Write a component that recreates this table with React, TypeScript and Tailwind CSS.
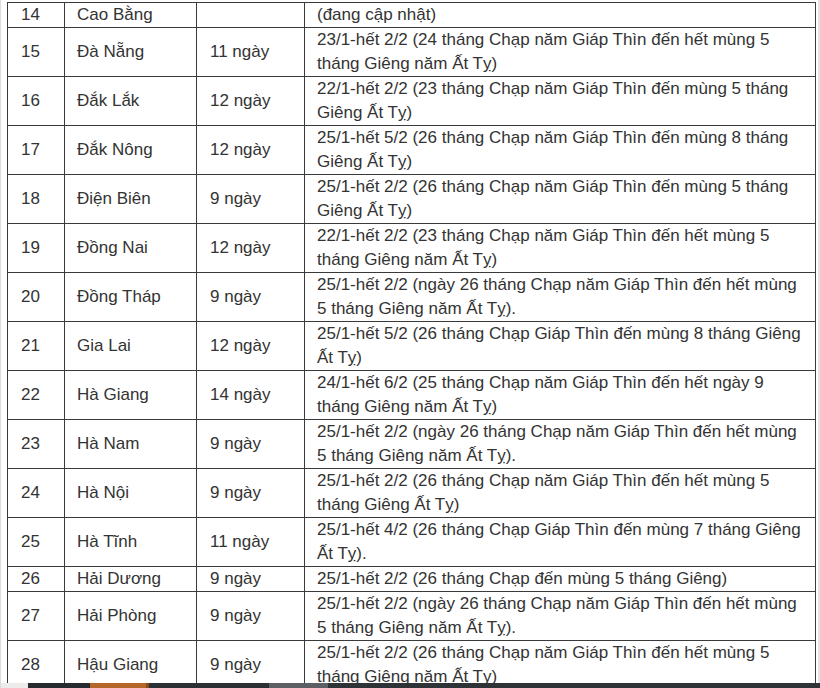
import React from "react";

type Row = { n: string; name: string; days: string; lines: string[] };

const rows: Row[] = [
  { n: "14", name: "Cao Bằng", days: "", lines: ["(đang cập nhật)"] },
  { n: "15", name: "Đà Nẵng", days: "11 ngày", lines: ["23/1-hết 2/2 (24 tháng Chạp năm Giáp Thìn đến hết mùng 5", "tháng Giêng năm Ất Tỵ)"] },
  { n: "16", name: "Đắk Lắk", days: "12 ngày", lines: ["22/1-hết 2/2 (23 tháng Chạp năm Giáp Thìn đến mùng 5 tháng", "Giêng Ất Tỵ)"] },
  { n: "17", name: "Đắk Nông", days: "12 ngày", lines: ["25/1-hết 5/2 (26 tháng Chạp năm Giáp Thìn đến mùng 8 tháng", "Giêng Ất Tỵ)"] },
  { n: "18", name: "Điện Biên", days: "9 ngày", lines: ["25/1-hết 2/2 (26 tháng Chạp năm Giáp Thìn đến mùng 5 tháng", "Giêng Ất Tỵ)"] },
  { n: "19", name: "Đồng Nai", days: "12 ngày", lines: ["22/1-hết 2/2 (23 tháng Chạp năm Giáp Thìn đến hết mùng 5", "tháng Giêng năm Ất Tỵ)"] },
  { n: "20", name: "Đồng Tháp", days: "9 ngày", lines: ["25/1-hết 2/2 (ngày 26 tháng Chạp năm Giáp Thìn đến hết mùng", "5 tháng Giêng năm Ất Tỵ)."] },
  { n: "21", name: "Gia Lai", days: "12 ngày", lines: ["25/1-hết 5/2 (26 tháng Chạp Giáp Thìn đến mùng 8 tháng Giêng", "Ất Tỵ)"] },
  { n: "22", name: "Hà Giang", days: "14 ngày", lines: ["24/1-hết 6/2 (25 tháng Chạp năm Giáp Thìn đến hết ngày 9", "tháng Giêng năm Ất Tỵ)"] },
  { n: "23", name: "Hà Nam", days: "9 ngày", lines: ["25/1-hết 2/2 (ngày 26 tháng Chạp năm Giáp Thìn đến hết mùng", "5 tháng Giêng năm Ất Tỵ)."] },
  { n: "24", name: "Hà Nội", days: "9 ngày", lines: ["25/1-hết 2/2 (26 tháng Chạp năm Giáp Thìn đến hết mùng 5", "tháng Giêng Ất Tỵ)"] },
  { n: "25", name: "Hà Tĩnh", days: "11 ngày", lines: ["25/1-hết 4/2 (26 tháng Chạp Giáp Thìn đến mùng 7 tháng Giêng", "Ất Tỵ)."] },
  { n: "26", name: "Hải Dương", days: "9 ngày", lines: ["25/1-hết 2/2 (26 tháng Chạp đến mùng 5 tháng Giêng)"] },
  { n: "27", name: "Hải Phòng", days: "9 ngày", lines: ["25/1-hết 2/2 (ngày 26 tháng Chạp năm Giáp Thìn đến hết mùng", "5 tháng Giêng năm Ất Tỵ)."] },
  { n: "28", name: "Hậu Giang", days: "9 ngày", lines: ["25/1-hết 2/2 (26 tháng Chạp năm Giáp Thìn đến hết mùng 5", "tháng Giêng năm Ất Tỵ)"] },
];

export default function App() {
  return (
    <div
      className="relative w-[820px] h-[688px] overflow-hidden bg-white border-l border-[#dcdcdc]"
      style={{ fontFamily: '"Liberation Sans", Arial, sans-serif' }}
    >
      <div className="pl-[6px] pt-[2px]">
        <table className="table-fixed border-collapse w-[808px] text-[17px] leading-[24px] text-[#333]">
          <colgroup>
            <col className="w-[57px]" />
            <col className="w-[132px]" />
            <col className="w-[108px]" />
            <col className="w-[511px]" />
          </colgroup>
          <tbody>
            {rows.map((r) => (
              <tr key={r.n}>
                <td className="border border-[#3a3a3a] pl-[13px] pr-[4px] py-0 align-middle">{r.n}</td>
                <td className="border border-[#3a3a3a] pl-[12px] pr-[4px] py-0 align-middle whitespace-nowrap">{r.name}</td>
                <td className="border border-[#3a3a3a] pl-[13px] pr-[4px] py-0 align-middle whitespace-nowrap">{r.days}</td>
                <td className="border border-[#3a3a3a] pl-[12px] pr-[4px] py-0 align-middle">
                  {r.lines.map((l, i) => (
                    <div key={i} className="whitespace-nowrap">
                      {l}
                    </div>
                  ))}
                </td>
              </tr>
            ))}
          </tbody>
        </table>
      </div>
      <div className="absolute right-0 top-0 h-full w-[2px] bg-[#e4e4e4]" />
      <div className="absolute left-0 bottom-0 w-[820px] h-[5px] flex">
        <div className="w-[27px] bg-[#ececec]" />
        <div className="w-[62px] bg-[#262b2f]" />
        <div className="w-[56px] bg-[#b5672a]" />
        <div className="w-[3px] bg-[#8a4a18]" />
        <div className="w-[120px] bg-[#2b3035]" />
        <div className="w-[59px] bg-[#5c6064]" />
        <div className="flex-1 bg-[#2e3337]" />
      </div>
    </div>
  );
}
